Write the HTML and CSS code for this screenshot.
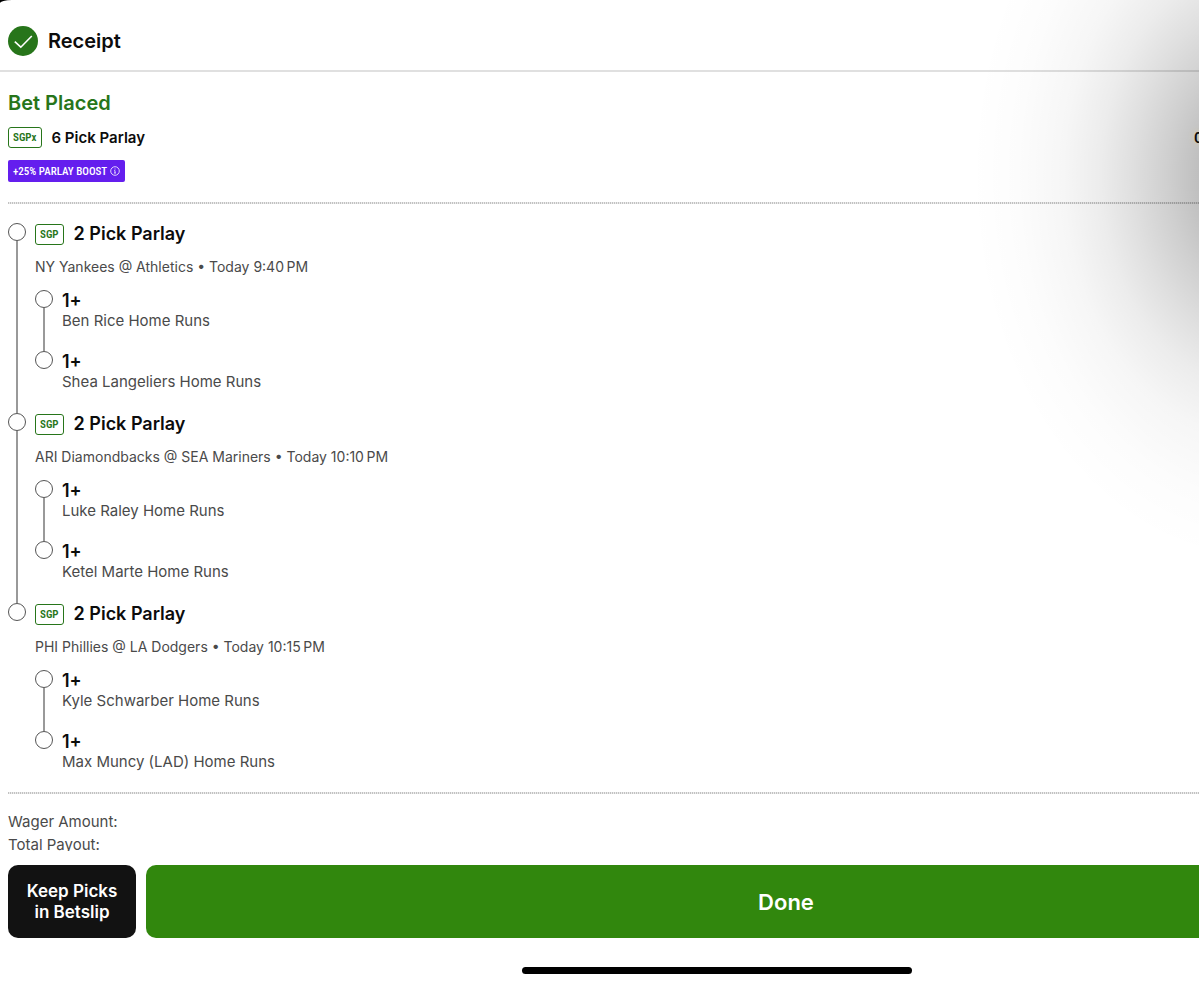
FILE: index.html
```html
<!DOCTYPE html>
<html lang="en">
<head>
    <meta charset="UTF-8">
    <meta name="viewport" content="width=device-width, initial-scale=1.0">
    <title>Receipt</title>
    <link rel="stylesheet" href="styles.css">
</head>
<body>
    <main class="sheet">
        <header class="sheet-header">
            <svg class="check-icon" viewBox="0 0 30 30" aria-hidden="true">
                <circle cx="15" cy="15" r="15" fill="#27751a"/>
                <path d="M6.8 15.6l6 5.6L23.8 10" fill="none" stroke="#fff" stroke-width="1.6"/>
            </svg>
            <h1>Receipt</h1>
        </header>

        <section class="bet-summary">
            <h2>Bet Placed</h2>
            <div class="bet-row">
                <span class="badge">SGPx</span>
                <h3>6 Pick Parlay</h3>
                <span class="odds">O</span>
            </div>
            <button class="boost" type="button">
                +25% PARLAY BOOST
                <svg class="info-icon" viewBox="0 0 10 10" aria-hidden="true">
                    <circle cx="5" cy="5" r="4.3" fill="none" stroke="#fff" stroke-width="0.8"/>
                    <path d="M5 2.5v1M4.2 4.6H5v2.3M4 7h2" fill="none" stroke="#fff" stroke-width="0.8"/>
                </svg>
            </button>
        </section>

        <hr class="divider">

        <ul class="legs">
            <li class="leg">
                <div class="rail"></div>
                <div class="leg-body">
                    <div class="leg-title"><span class="badge">SGP</span><h4>2 Pick Parlay</h4></div>
                    <p class="game">NY Yankees @ Athletics • Today 9:40&#8239;PM</p>
                    <ul class="picks">
                        <li class="pick"><div class="rail"></div><div class="pick-body"><strong>1+</strong><p>Ben Rice Home Runs</p></div></li>
                        <li class="pick"><div class="rail"></div><div class="pick-body"><strong>1+</strong><p>Shea Langeliers Home Runs</p></div></li>
                    </ul>
                </div>
            </li>
            <li class="leg">
                <div class="rail"></div>
                <div class="leg-body">
                    <div class="leg-title"><span class="badge">SGP</span><h4>2 Pick Parlay</h4></div>
                    <p class="game">ARI Diamondbacks @ SEA Mariners • Today 10:10&#8239;PM</p>
                    <ul class="picks">
                        <li class="pick"><div class="rail"></div><div class="pick-body"><strong>1+</strong><p>Luke Raley Home Runs</p></div></li>
                        <li class="pick"><div class="rail"></div><div class="pick-body"><strong>1+</strong><p>Ketel Marte Home Runs</p></div></li>
                    </ul>
                </div>
            </li>
            <li class="leg">
                <div class="rail"></div>
                <div class="leg-body">
                    <div class="leg-title"><span class="badge">SGP</span><h4>2 Pick Parlay</h4></div>
                    <p class="game">PHI Phillies @ LA Dodgers • Today 10:15&#8239;PM</p>
                    <ul class="picks">
                        <li class="pick"><div class="rail"></div><div class="pick-body"><strong>1+</strong><p>Kyle Schwarber Home Runs</p></div></li>
                        <li class="pick"><div class="rail"></div><div class="pick-body"><strong>1+</strong><p>Max Muncy (LAD) Home Runs</p></div></li>
                    </ul>
                </div>
            </li>
        </ul>

        <hr class="divider">

        <section class="totals">
            <p>Wager Amount:</p>
            <p>Total Payout:</p>
        </section>

        <footer class="actions">
            <button class="keep-button" type="button">Keep Picks<br>in Betslip</button>
            <button class="done-button" type="button">Done</button>
        </footer>

        <div class="home-indicator"></div>
    </main>
</body>
</html>
```

FILE: styles.css
```css
*, *::before, *::after {
    box-sizing: border-box;
    margin: 0;
    padding: 0;
}
body {
    font-family: Inter, "Liberation Sans", sans-serif;
    background-color: #000;
    color: #0c0c0c;
    overflow: hidden;
}
ul {
    list-style: none;
}
button {
    font-family: inherit;
    border: none;
    cursor: pointer;
}

/* the sheet runs on past the right edge of the window */
.sheet {
    min-height: 100vh;
    margin-right: -235px;
    border-top-left-radius: 12px 3px;
    background-color: #fff;
    background-image: radial-gradient(290px 390px at calc(100% - 174px) 175px,
        rgba(0, 0, 0, 0.33) 0%,
        rgba(0, 0, 0, 0.26) 20%,
        rgba(0, 0, 0, 0.19) 32%,
        rgba(0, 0, 0, 0.125) 44%,
        rgba(0, 0, 0, 0.075) 55%,
        rgba(0, 0, 0, 0.035) 68%,
        rgba(0, 0, 0, 0.01) 84%,
        rgba(0, 0, 0, 0) 100%);
}
.sheet-header {
    display: flex;
    align-items: center;
    gap: 10px;
    height: 72px;
    padding: 12px 8px 0;
    border-bottom: 2px solid rgba(0, 0, 0, 0.12);
}
.check-icon {
    width: 30px;
    height: 30px;
}
h1, h2 {
    font-size: 20px;
    line-height: 24px;
    font-weight: 600;
}
h2 {
    color: #27751a;
}

.bet-summary {
    padding: 19px 8px 20px;
}
.bet-row {
    display: flex;
    align-items: center;
    gap: 10px;
    margin: 12px 0;
}
h3 {
    font-size: 15px;
    line-height: 21px;
    font-weight: 600;
}
.badge {
    height: 21px;
    padding: 0 4px;
    border: 1px solid #27751a;
    border-radius: 3px;
    color: #27751a;
    font-family: "Roboto Condensed", Roboto, sans-serif;
    font-size: 11px;
    line-height: 20px;
    font-weight: 600;
}
.odds {
    width: 232px;
    margin-left: auto;
    font-family: "Roboto Condensed", Roboto, sans-serif;
    font-size: 15px;
    font-weight: 600;
    text-shadow: 0 0 6px #e0cf9c;
}
.boost {
    display: flex;
    align-items: center;
    gap: 3px;
    height: 22px;
    padding: 0 5px;
    border-radius: 2px;
    background-color: #641eee;
    color: #fff;
    font-family: "Roboto Condensed", Roboto, sans-serif;
    font-size: 11px;
    font-weight: 500;
}
.info-icon {
    width: 10px;
    height: 10px;
}

.divider {
    height: 2px;
    margin: 0 8px;
    border: none;
    background: repeating-linear-gradient(90deg, rgba(0, 0, 0, 0.24) 0 1px, rgba(0, 0, 0, 0.08) 1px 2px);
}

.legs {
    padding: 19px 8px 0;
}
.leg, .pick {
    display: flex;
    gap: 9px;
}
.rail {
    display: flex;
    flex-direction: column;
    align-items: center;
    width: 18px;
}
.rail::before {
    content: "";
    width: 18px;
    height: 18px;
    border: 1px solid #555;
    border-radius: 50%;
}
.rail::after {
    content: "";
    flex: 1;
    width: 2px;
    background-color: #999;
}
.leg:last-child > .rail::after,
.pick:last-child > .rail::after {
    display: none;
}
.leg-body {
    padding-bottom: 22px;
}
.leg:last-child .leg-body {
    padding-bottom: 21px;
}
.leg-title {
    display: flex;
    align-items: center;
    gap: 10px;
}
h4 {
    font-size: 18px;
    line-height: 22px;
    font-weight: 600;
}
.game {
    margin: 12px 0 13px;
    color: #4a4a4a;
    font-size: 14px;
    line-height: 20px;
}
.pick-body {
    padding-bottom: 21px;
    color: #4a4a4a;
    font-size: 15px;
    line-height: 18px;
}
.pick:last-child .pick-body {
    padding-bottom: 0;
}
.pick-body strong {
    display: block;
    color: #0c0c0c;
    font-size: 18px;
    line-height: 22px;
    font-weight: 600;
}

/* the action bar cuts into the last line */
.totals {
    height: 57px;
    padding: 16px 8px 0;
    overflow: hidden;
    color: #4a4a4a;
    font-size: 15px;
    line-height: 23px;
}
.actions {
    display: flex;
    gap: 10px;
    padding: 14px 8px 0;
}
.keep-button, .done-button {
    height: 73px;
    border-radius: 10px;
    color: #fff;
    font-weight: 600;
}
.keep-button {
    width: 128px;
    background-color: #121212;
    font-size: 17px;
    line-height: 21px;
}
.done-button {
    flex: 1;
    background-color: #31870d;
    font-size: 22px;
}
.home-indicator {
    width: 390px;
    height: 7px;
    margin: 29px auto 0;
    border-radius: 4px;
    background-color: #000;
}
```
